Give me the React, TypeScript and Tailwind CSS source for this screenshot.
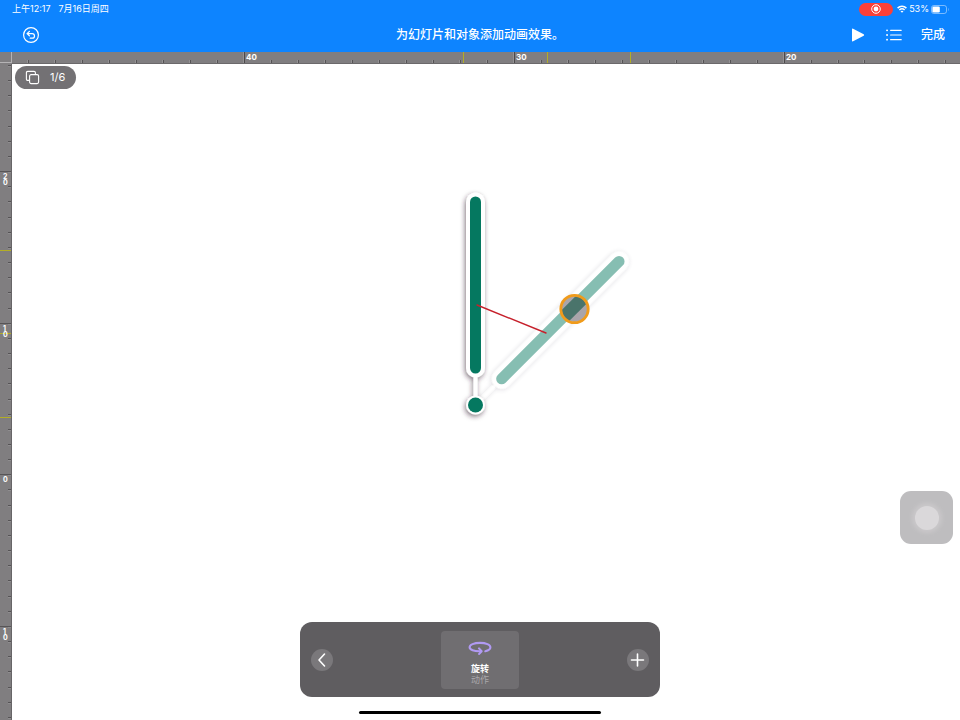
import type { ReactNode } from "react";

const MAJOR_X = [{ at: 244, label: "40" }, { at: 514, label: "30" }, { at: 784, label: "20" }];
const MAJOR_Y = [
  { at: 171, label: "20" },
  { at: 323, label: "10" },
  { at: 474, label: "0" },
  { at: 626, label: "10" },
];
const GUIDES_X = [463, 547, 630];
const GUIDES_Y = [250, 333, 417];
const RULER_TOP = 52;

function range(first: number, step: number, last: number) {
  const out: number[] = [];
  for (let v = first; v < last; v += step) out.push(Math.round(v));
  return out;
}

const MINOR_X = range(28.4, 26.97, 2600);
const MINOR_Y = range(65, 15.16, 1800);

function HorizontalRuler() {
  return (
    <svg className="block h-3 w-full shrink-0 bg-[#807e80]" aria-hidden="true">
      {MINOR_X.map((x) => (
        <g key={x}>
          <rect x={x} y="8" width="1" height="3" fill="#555355" />
          <rect x={x - 1} y="8" width="1" height="3" fill="#949294" />
        </g>
      ))}
      <rect x="0" y="11" width="100%" height="1" fill="#6b696b" />
      {MAJOR_X.map((m) => (
        <g key={m.at}>
          <rect x={m.at} y="0" width="1" height="11" fill="#4c4a4c" />
          <rect x={m.at - 1} y="0" width="1" height="11" fill="#949294" />
          <text x={m.at + 2} y="8" fontSize="8" fontWeight="700" fill="#fff">
            {m.label}
          </text>
        </g>
      ))}
      {GUIDES_X.map((x) => (
        <rect key={x} x={x} y="0" width="1" height="11" fill="#b3ae26" />
      ))}
      <rect x="0" y="0" width="12" height="12" fill="#807e80" />
      <rect x="11" y="0" width="1" height="11" fill="#b5b3b5" />
      <rect x="0" y="10" width="12" height="1" fill="#b5b3b5" />
    </svg>
  );
}

function VerticalRuler() {
  return (
    <svg className="block w-3 shrink-0 self-stretch bg-[#807e80]" height="100%" aria-hidden="true">
      <g transform={`translate(0 ${-RULER_TOP - 12})`}>
        {MINOR_Y.map((y) => (
          <g key={y}>
            <rect x="8" y={y} width="3" height="1" fill="#555355" />
            <rect x="8" y={y + 1} width="3" height="1" fill="#8f8d8f" />
          </g>
        ))}
        {GUIDES_Y.map((y) => (
          <rect key={y} x="0" y={y} width="11" height="1" fill="#b3ae26" />
        ))}
        {MAJOR_Y.map((m) => (
          <g key={m.at}>
            <rect x="0" y={m.at} width="11" height="1" fill="#575557" />
            <text y={m.at + 8} fontSize="7" fontWeight="700" fill="#fff">
              {m.label.split("").map((digit, i) => (
                <tspan key={i} x="3" dy={i * 6}>
                  {digit}
                </tspan>
              ))}
            </text>
          </g>
        ))}
      </g>
      <rect x="11" y="0" width="1" height="100%" fill="#676567" />
    </svg>
  );
}

function ClockHands() {
  return (
    <svg className="absolute inset-0 h-full w-full" role="img" aria-label="时钟指针">
      <defs>
        <filter id="shadow" filterUnits="userSpaceOnUse" x="380" y="90" width="280" height="300">
          <feDropShadow dx="-1" dy="2" stdDeviation="2.8" floodColor="#35222e" floodOpacity="0.6" />
        </filter>
        <filter id="ghostShadow" filterUnits="userSpaceOnUse" x="380" y="90" width="280" height="300">
          <feDropShadow dx="0" dy="1" stdDeviation="2.4" floodColor="#4a3a5e" floodOpacity="0.42" />
        </filter>
        <clipPath id="touch">
          <circle cx="562" cy="245" r="13" />
        </clipPath>
      </defs>
      <g strokeLinecap="round" fill="none">
        <g opacity="0.48" transform="rotate(45 463.5 341)">
          <g filter="url(#ghostShadow)">
            <path d="M463.5 316V338" stroke="#fff" strokeWidth="4" />
            <path d="M463.5 138V304" stroke="#fff" strokeWidth="20" />
          </g>
          <path d="M463.5 138V304" stroke="#057860" strokeWidth="11" />
        </g>
        <g filter="url(#shadow)">
          <path d="M463.5 312V334" stroke="#fff" strokeWidth="4" />
          <path d="M463.5 138V304" stroke="#fff" strokeWidth="19" />
          <circle cx="463.5" cy="341" r="9.5" fill="#fff" />
        </g>
        <path d="M463.5 138V304" stroke="#057860" strokeWidth="11" />
        <circle cx="463.5" cy="341" r="7.5" fill="#057860" />
        <path d="M465 241L534 269" stroke="#c6202b" strokeWidth="1.4" />
      </g>
      <circle cx="562.5" cy="245" r="13" fill="#aaa5aa" />
      <g clipPath="url(#touch)">
        <path d="M540 265L585 220" stroke="#4a746b" strokeWidth="13" />
      </g>
      <circle cx="562.5" cy="245" r="13.7" fill="none" stroke="#f09b1b" strokeWidth="2.8" />
    </svg>
  );
}

function IconButton({ label, className, children }: { label: string; className: string; children: ReactNode }) {
  return (
    <button type="button" aria-label={label} className={`flex items-center justify-center ${className}`}>
      {children}
    </button>
  );
}

function StatusBar() {
  return (
    <div className="flex h-[18px] items-center justify-between pr-[11px] pl-3 text-[9px] leading-3">
      <div className="flex gap-2">
        <span>上午12:17</span>
        <span>7月16日周四</span>
      </div>
      <div className="flex items-center">
        <span className="mr-1 flex h-[13px] w-[34px] items-center justify-center rounded-full bg-[#fb4038]">
          <svg width="10" height="10" viewBox="0 0 10 10" fill="none">
            <circle cx="5" cy="5" r="4.3" stroke="#fff" />
            <circle cx="5" cy="5" r="2.4" fill="#fff" />
          </svg>
        </span>
        <svg className="mr-0.5" width="10" height="8" viewBox="0 0 10 8" fill="none" stroke="#fff" strokeWidth="1.5">
          <path d="M.6 3.1C3.1.6 6.9.6 9.4 3.1M2.4 5C3.9 3.6 6.1 3.6 7.6 5" />
          <path d="M5 7.8L3.5 6.2C4.3 5.5 5.7 5.5 6.5 6.2Z" fill="#fff" stroke="none" />
        </svg>
        <span className="mr-0.5">53%</span>
        <svg width="18" height="9" viewBox="0 0 18 9" fill="none">
          <rect x=".5" y=".5" width="15" height="8" rx="2.3" stroke="#fff" strokeOpacity=".45" />
          <path d="M17 3V6C17.8 5.5 17.8 3.5 17 3Z" fill="#fff" opacity=".5" />
          <rect x="1.4" y="1.4" width="7.4" height="6.2" rx="1.3" fill="#fff" />
        </svg>
      </div>
    </div>
  );
}

function NavBar() {
  return (
    <div className="grid h-[34px] grid-cols-[1fr_auto_1fr] items-center px-[15px]">
      <IconButton label="撤销" className="ml-[7px] size-[18px]">
        <svg width="18" height="18" viewBox="0 0 18 18" fill="none" stroke="#fff" strokeWidth="1.2" strokeLinecap="round" strokeLinejoin="round">
          <circle cx="9" cy="9" r="7.4" />
          <path d="M7.4 5.4L5 7.6L7.4 9.8M5.2 7.6H10.2A2.3 2.3 0 0 1 10.2 12.2H8.2" />
        </svg>
      </IconButton>
      <h1 className="text-[12px] leading-4 font-medium">为幻灯片和对象添加动画效果。</h1>
      <div className="flex items-center justify-end">
        <IconButton label="播放" className="mr-[21px] w-[14px]">
          <svg width="14" height="14" viewBox="0 0 14 14" fill="#fff">
            <path d="M1 1.3Q1 .1 2.1.7L12.7 6.3Q13.7 7 12.7 7.7L2.1 13.3Q1 13.9 1 12.7Z" />
          </svg>
        </IconButton>
        <IconButton label="构建顺序" className="mr-[19px] w-4">
          <svg width="16" height="12" viewBox="0 0 16 12" fill="none" stroke="#fff" strokeWidth="1.2" strokeLinecap="round">
            <path d="M4.6 1.3H15.2M4.6 6H15.2M4.6 10.7H15.2" />
            <path d="M1 1.3H1.1M1 6H1.1M1 10.7H1.1" strokeWidth="1.8" />
          </svg>
        </IconButton>
        <button type="button" className="text-[12px] leading-4 font-medium">
          完成
        </button>
      </div>
    </div>
  );
}

function BuildPanel() {
  return (
    <section
      aria-label="动画构建"
      className="absolute bottom-[23px] left-1/2 flex h-[75px] w-[360px] -translate-x-1/2 items-center justify-between rounded-xl bg-[#5f5d60] px-[11px]"
    >
      <IconButton label="返回" className="size-[22px] rounded-full bg-[#7a787b]">
        <svg width="22" height="22" viewBox="0 0 22 22" fill="none" stroke="#fff" strokeWidth="1.6" strokeLinecap="round" strokeLinejoin="round">
          <path d="M13.5 5L8 11L13.5 17" />
        </svg>
      </IconButton>
      <button type="button" className="flex h-[58px] w-[78px] flex-col items-center rounded bg-[#706e71] pt-2.5 text-[9px] leading-[11px]">
        <svg className="mb-2" width="24" height="14" viewBox="0 0 24 14" fill="none" stroke="#b19af3" strokeWidth="2.1" strokeLinecap="round" strokeLinejoin="round">
          <path d="M17.3 10.2C20.6 9.5 22.4 8.2 22.4 6.3C22.4 3.7 18 1.9 12 1.9S1.6 3.7 1.6 6.3C1.6 8.9 6 10.4 12.6 10.2" />
          <path d="M11 7.4L13.6 10.2L11.2 12.9" />
        </svg>
        <span className="font-bold">旋转</span>
        <span className="text-[#aaa8ab]">动作</span>
      </button>
      <IconButton label="添加" className="size-[22px] rounded-full bg-[#7a787b]">
        <svg width="22" height="22" viewBox="0 0 22 22" fill="none" stroke="#fff" strokeWidth="1.6" strokeLinecap="round">
          <path d="M4.5 11H16.5M10.5 5V17" />
        </svg>
      </IconButton>
    </section>
  );
}

export default function App() {
  return (
    <div className="relative flex h-screen flex-col overflow-hidden bg-white font-[Inter,'Noto_Sans_CJK_SC',sans-serif] text-white">
      <header className="shrink-0 bg-[#0d84ff]">
        <StatusBar />
        <NavBar />
      </header>
      <HorizontalRuler />
      <div className="flex min-h-0 flex-1">
        <VerticalRuler />
        <main className="relative flex-1">
          <ClockHands />
          <button
            type="button"
            className="absolute top-0.5 left-[3px] flex h-[23px] w-[61px] items-center gap-2.5 rounded-full bg-[#737174] pl-2.5 text-[11px]"
          >
            <svg width="15" height="15" viewBox="0 0 15 15" fill="none" stroke="#fff" strokeWidth="1.1" strokeLinejoin="round">
              <rect x="4.6" y="4.6" width="9" height="9" rx="1.5" />
              <path d="M4.6 10.4H2.8Q1.4 10.4 1.4 9V2.8Q1.4 1.4 2.8 1.4H9Q10.4 1.4 10.4 2.8V4.6" />
            </svg>
            <span>1/6</span>
          </button>
          <button
            type="button"
            aria-label="辅助触控"
            className="absolute right-[7px] bottom-44 flex size-[53px] items-center justify-center rounded-[11px] bg-[#bebdbf]"
          >
            <span className="size-6 rounded-full bg-[#dad8da] shadow-[0_0_4px_3px_#cac8ca]" />
          </button>
        </main>
      </div>
      <BuildPanel />
      <div className="absolute bottom-1.5 left-1/2 h-[3px] w-[242px] -translate-x-1/2 rounded-full bg-black" />
    </div>
  );
}
